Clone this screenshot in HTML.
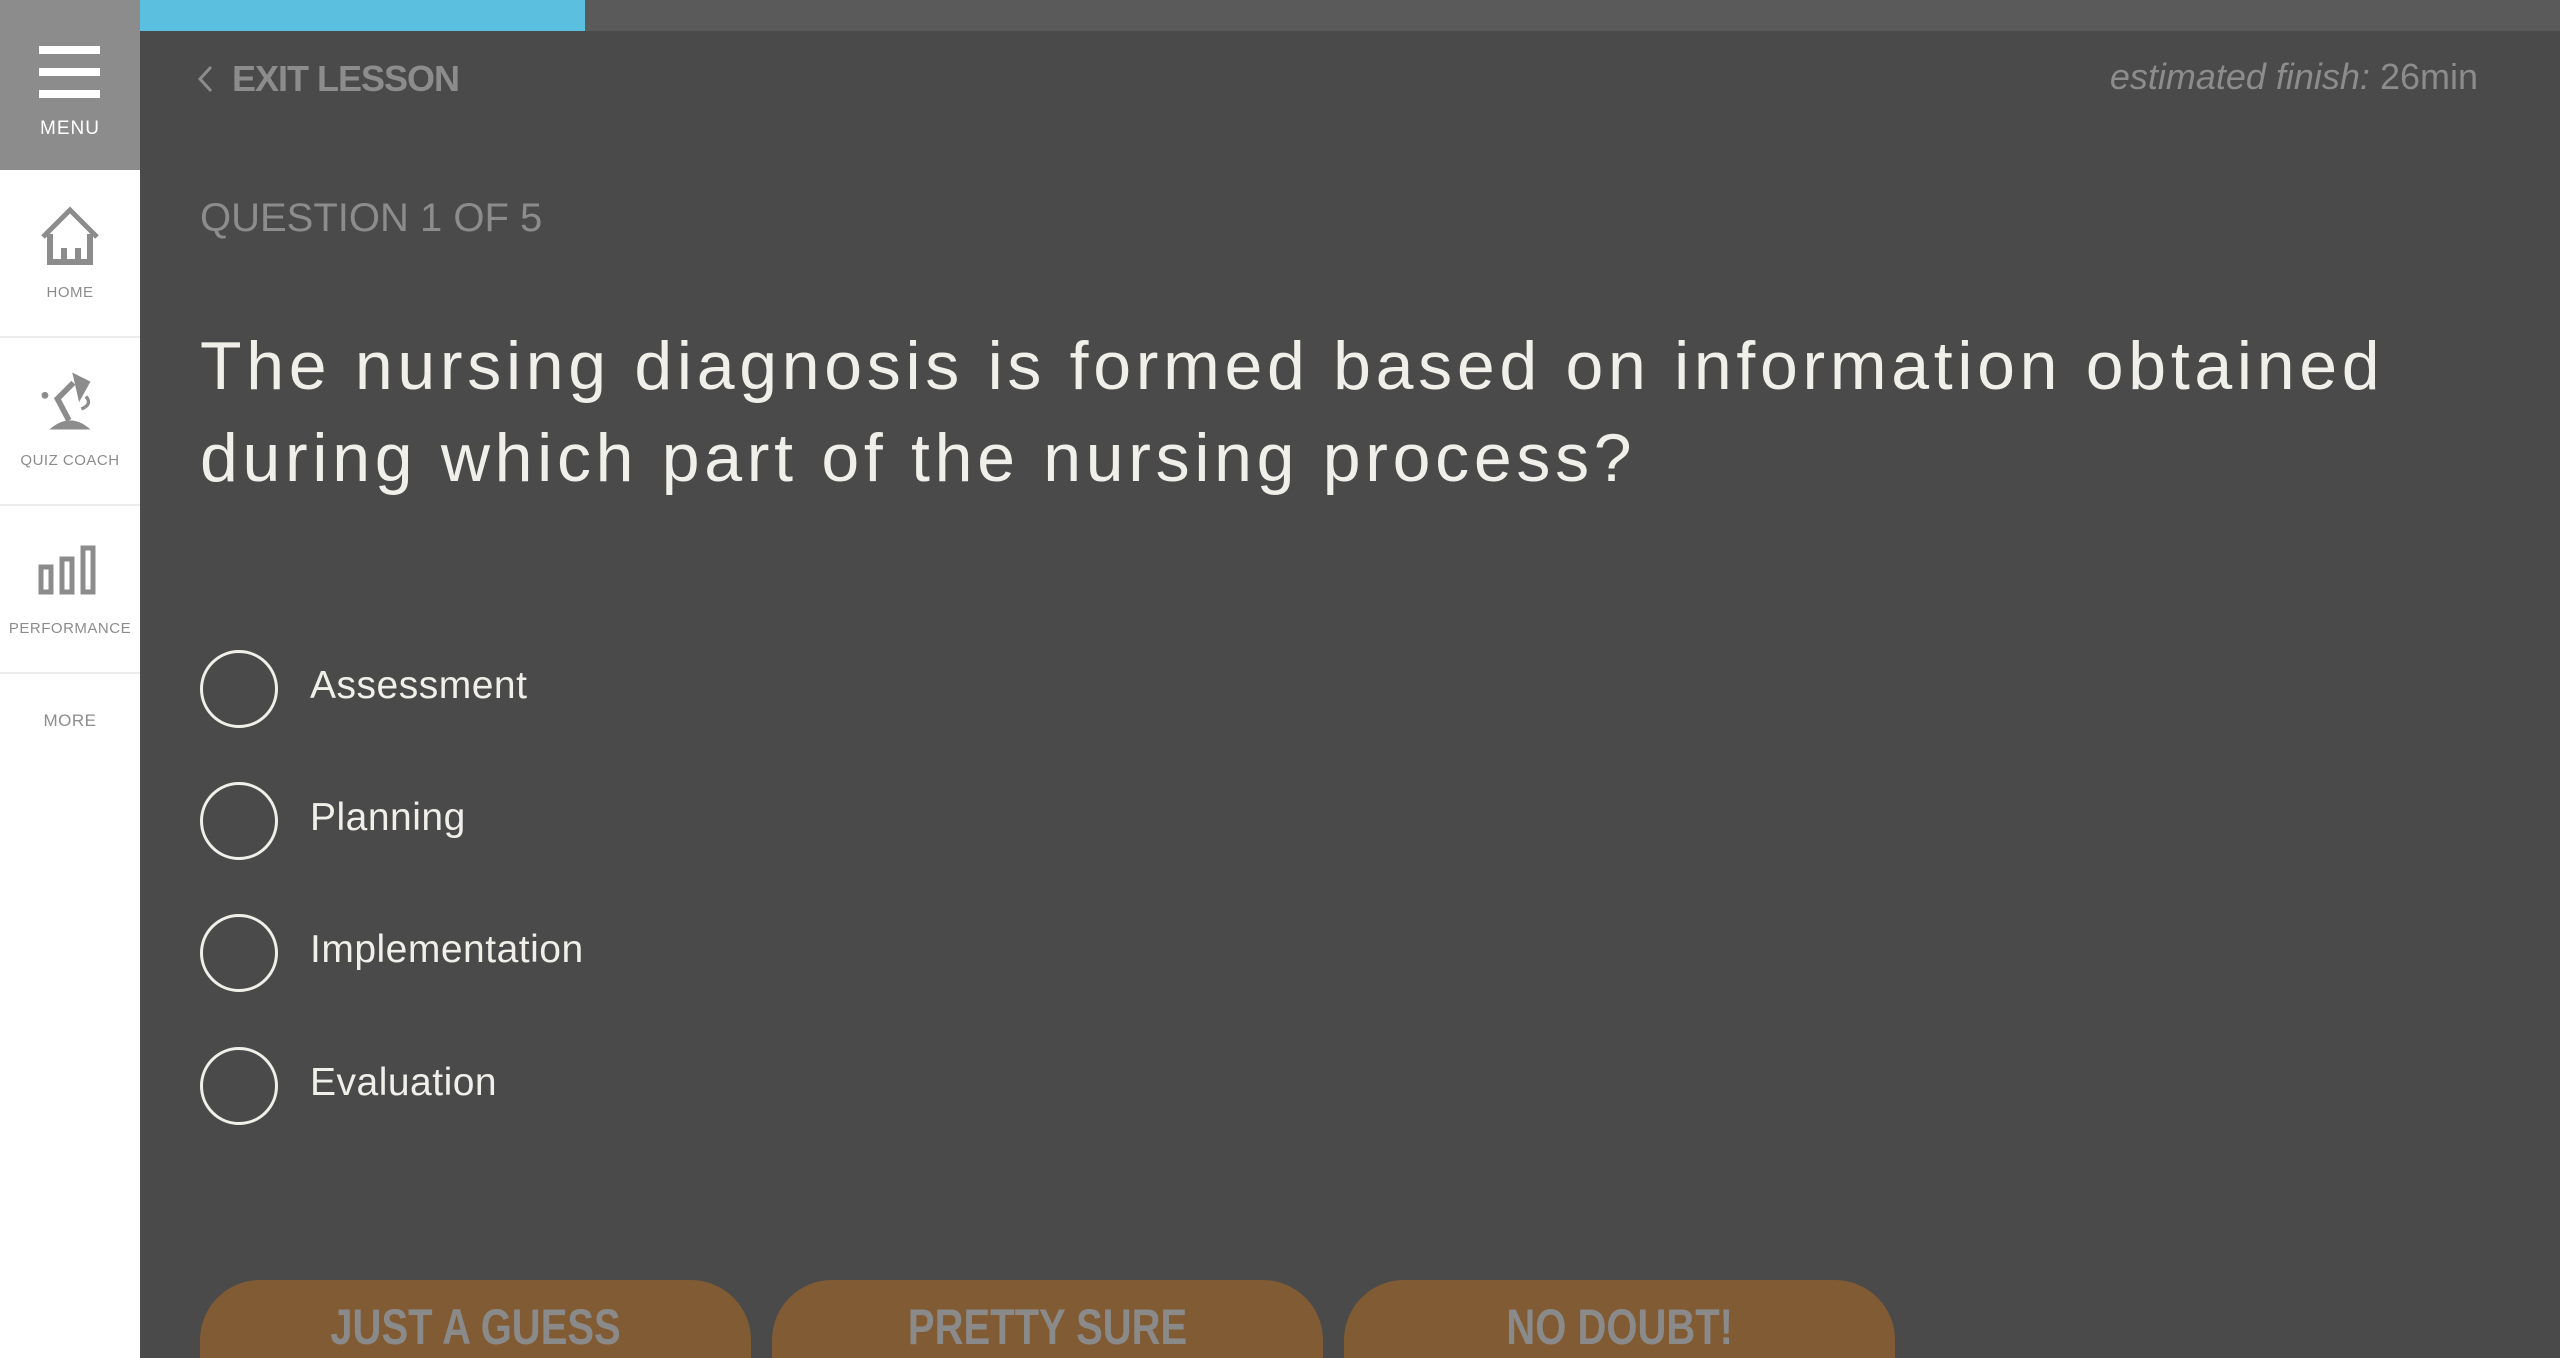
<!DOCTYPE html>
<html><head><meta charset="utf-8"><style>
*{margin:0;padding:0;box-sizing:border-box}
html,body{width:2560px;height:1358px;overflow:hidden;background:#4a4a4a;font-family:"Liberation Sans",sans-serif}
#wrap{position:relative;width:2560px;height:1358px;overflow:hidden}
#side{position:absolute;left:0;top:0;width:140px;height:1358px;background:#fff}
#menu{position:absolute;left:0;top:0;width:140px;height:170px;background:#8c8c8c}
.bar{position:absolute;left:39px;width:61px;height:8px;background:#fff}
.lbl{position:absolute;left:0;width:140px;text-align:center;color:#8c8c8c;font-size:15px;letter-spacing:0.5px}
.sep{position:absolute;left:0;width:140px;height:2px;background:#ececec}
#prog{position:absolute;left:140px;top:0;width:2420px;height:31px;background:#5a5a5a}
#blue{position:absolute;left:140px;top:0;width:445px;height:31px;background:#5bbfdf}
.t{position:absolute;white-space:nowrap}
.circ{position:absolute;left:200px;width:78px;height:78px;border:3px solid #f0efe9;border-radius:50%}
.opt{position:absolute;left:310px;color:#f0efe9;font-size:39px;letter-spacing:0.5px;white-space:nowrap}
.btn{position:absolute;top:1280px;width:551px;height:78px;background:#815b33;border-radius:60px 60px 0 0;color:#8a8a8a;font-weight:bold;font-size:50px;text-align:center;padding-top:18px;white-space:nowrap}
.btn span{display:inline-block;transform:scaleX(0.8)}
</style></head><body><div id="wrap">
<div id="side">
 <div id="menu">
  <div class="bar" style="top:46px"></div>
  <div class="bar" style="top:68px"></div>
  <div class="bar" style="top:90px"></div>
  <div class="lbl" style="top:118px;color:#fff;font-size:19px;letter-spacing:1px">MENU</div>
 </div>
 <svg style="position:absolute;left:40px;top:204px" width="60" height="62" viewBox="0 0 60 62"><path d="M3 33 L30 6 L57 33" fill="none" stroke="#8c8c8c" stroke-width="5"/><path d="M10 30 V58 H50 V30 M24 58 V44 M38 58 V44" fill="none" stroke="#8c8c8c" stroke-width="6"/></svg>
 <div class="lbl" style="top:284px">HOME</div>
 <div class="sep" style="top:336px"></div>
 <svg style="position:absolute;left:38px;top:368px" width="64" height="66" viewBox="0 0 56 58"><path d="M30 4 L46 12 L36 30 Z" fill="#8c8c8c"/><path d="M31 13 L17 27 L27 46" fill="none" stroke="#8c8c8c" stroke-width="5"/><circle cx="6" cy="24" r="3" fill="#8c8c8c"/><path d="M10 54 Q28 38 46 54 Z" fill="#8c8c8c"/><path d="M42 25 Q48 32 38 36" fill="none" stroke="#8c8c8c" stroke-width="3"/></svg>
 <div class="lbl" style="top:452px">QUIZ COACH</div>
 <div class="sep" style="top:504px"></div>
 <svg style="position:absolute;left:38px;top:545px" width="64" height="50" viewBox="0 0 64 50"><rect x="3" y="22" width="10" height="25" fill="none" stroke="#8c8c8c" stroke-width="5"/><rect x="24" y="14" width="10" height="33" fill="none" stroke="#8c8c8c" stroke-width="5"/><rect x="45" y="3" width="10" height="44" fill="none" stroke="#8c8c8c" stroke-width="5"/></svg>
 <div class="lbl" style="top:620px">PERFORMANCE</div>
 <div class="sep" style="top:672px"></div>
 <div class="lbl" style="top:711px;font-size:17px">MORE</div>
</div>
<div id="prog"></div><div id="blue"></div>
<svg style="position:absolute;left:196px;top:64px" width="20" height="30" viewBox="0 0 20 30"><path d="M15 3 L4 15 L15 27" fill="none" stroke="#8c8c8c" stroke-width="3"/></svg>
<div class="t" style="left:232px;top:58px;color:#8c8c8c;font-size:36px;font-weight:bold;letter-spacing:-1px">EXIT LESSON</div>
<div class="t" style="right:82px;top:56px;color:#8c8c8c;font-size:36px"><i>estimated finish:</i> 26min</div>
<div class="t" style="left:200px;top:196px;color:#8c8c8c;font-size:40px">QUESTION 1 OF 5</div>
<div class="t" style="left:200px;top:320px;color:#f0efe9;font-size:68px;line-height:92px;letter-spacing:4.7px">The nursing diagnosis is formed based on information obtained<br>during which part of the nursing process?</div>
<div class="circ" style="top:650px"></div><div class="opt" style="top:664px">Assessment</div>
<div class="circ" style="top:782px"></div><div class="opt" style="top:796px">Planning</div>
<div class="circ" style="top:914px"></div><div class="opt" style="top:928px">Implementation</div>
<div class="circ" style="top:1047px"></div><div class="opt" style="top:1061px">Evaluation</div>
<div class="btn" style="left:200px"><span>JUST A GUESS</span></div>
<div class="btn" style="left:772px"><span>PRETTY SURE</span></div>
<div class="btn" style="left:1344px"><span>NO DOUBT!</span></div>
</div></body></html>
